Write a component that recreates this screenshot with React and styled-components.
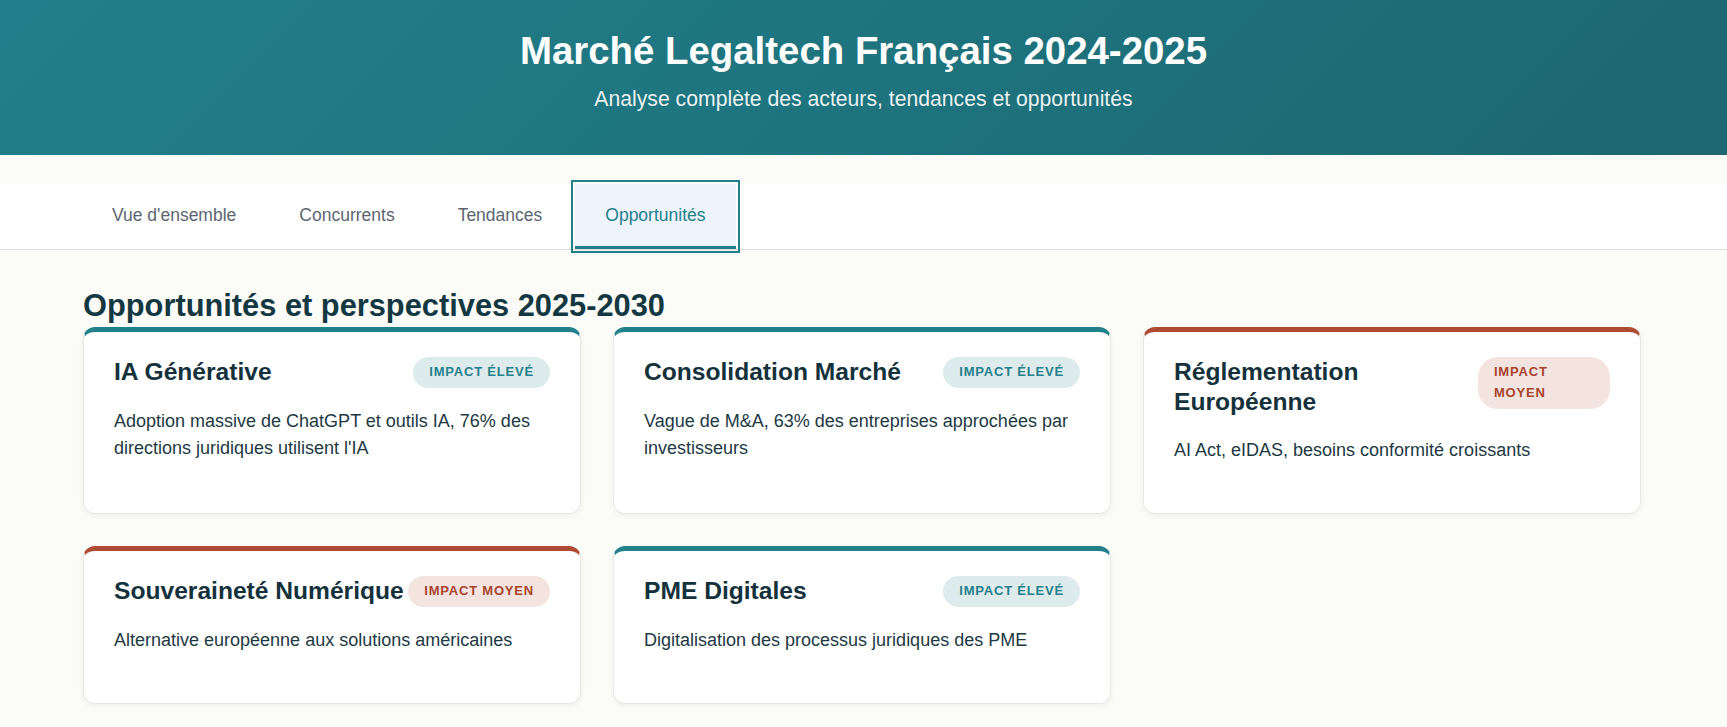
import React, { useState } from 'react';
import styled, { createGlobalStyle } from 'styled-components';

const GlobalStyle = createGlobalStyle`
  * { box-sizing: border-box; }
  body {
    margin: 0;
    background: #fbfbf8;
    font-family: "Liberation Sans", Arial, sans-serif;
    color: #16333d;
  }
`;

// palette
const tones = {
  teal: { bar: '#21808a', bg: '#deebed', text: '#26808b' },
  rust: { bar: '#b04b33', bg: '#f3e4e0', text: '#a8432d' }
};

const Header = styled.header`
  background: linear-gradient(135deg, #21808b 0%, #1c6771 100%);
  color: #ffffff;
  text-align: center;
  padding: 28px 20px 44px;

  h1 {
    margin: 0 0 12px;
    font-size: 2.4rem;
    line-height: 1.2;
    font-weight: 700;
  }

  p {
    margin: 0;
    font-size: 21.2px;
    line-height: 1.18;
    color: rgba(255, 255, 255, 0.92);
  }
`;

const TabBar = styled.nav`
  margin-top: 29px;
  background: #ffffff;
  border-bottom: 1px solid #dcdcdc;
  padding: 0 82px;
  display: flex;
  gap: 3px;
`;

const Tab = styled.button`
  font-family: inherit;
  font-size: 17.5px;
  line-height: 20px;
  padding: 21px 30px;
  border: none;
  border-bottom: 3px solid ${p => (p.$active ? '#21808a' : 'transparent')};
  background: ${p => (p.$active ? '#eef4fc' : 'transparent')};
  color: ${p => (p.$active ? '#21808a' : '#5c6670')};
  outline: ${p => (p.$active ? '2px solid #21808a' : 'none')};
  outline-offset: 2px;
  cursor: pointer;
`;

const Main = styled.main`
  padding: 38px 86px 40px 83px;
`;

const SectionTitle = styled.h2`
  margin: 0 0 3px;
  font-size: 30.8px;
  line-height: 1.17;
  font-weight: 700;
  color: #143842;
`;

const Grid = styled.div`
  display: grid;
  grid-template-columns: repeat(3, 1fr);
  gap: 32px;
`;

const Card = styled.div`
  background: #ffffff;
  border: 1px solid #e7e7e4;
  border-top: 5px solid ${p => tones[p.$tone].bar};
  border-radius: 12px;
  padding: 25px 30px 31px;
  box-shadow: 0 2px 6px rgba(0, 0, 0, 0.05);
`;

const CardHead = styled.div`
  display: flex;
  justify-content: space-between;
  align-items: flex-start;

  h3 {
    margin: 0 0 3px;
    font-size: 24.6px;
    line-height: 1.2;
    font-weight: 700;
    color: #15323c;
  }
`;

const Badge = styled.span`
  background: ${p => tones[p.$tone].bg};
  color: ${p => tones[p.$tone].text};
  font-size: 13px;
  font-weight: 700;
  letter-spacing: 0.8px;
  line-height: 1.6;
  padding: 5px 16px;
  border-radius: 20px;
  text-transform: uppercase;
`;

const Desc = styled.p`
  margin: 18px 0;
  font-size: 1.125rem;
  line-height: 1.5;
  color: #1d3943;
`;

const opportunities = [
  {
    title: 'IA Générative',
    impact: 'Impact élevé',
    tone: 'teal',
    text: "Adoption massive de ChatGPT et outils IA, 76% des directions juridiques utilisent l'IA"
  },
  {
    title: 'Consolidation Marché',
    impact: 'Impact élevé',
    tone: 'teal',
    text: 'Vague de M&A, 63% des entreprises approchées par investisseurs'
  },
  {
    title: 'Réglementation Européenne',
    impact: 'Impact moyen',
    tone: 'rust',
    text: 'AI Act, eIDAS, besoins conformité croissants'
  },
  {
    title: 'Souveraineté Numérique',
    impact: 'Impact moyen',
    tone: 'rust',
    text: 'Alternative européenne aux solutions américaines'
  },
  {
    title: 'PME Digitales',
    impact: 'Impact élevé',
    tone: 'teal',
    text: 'Digitalisation des processus juridiques des PME'
  }
];

const tabs = ["Vue d'ensemble", 'Concurrents', 'Tendances', 'Opportunités'];

export default function App() {
  const [active, setActive] = useState('Opportunités');

  return (
    <>
      <GlobalStyle />
      <Header>
        <h1>Marché Legaltech Français 2024-2025</h1>
        <p>Analyse complète des acteurs, tendances et opportunités</p>
      </Header>

      <TabBar>
        {tabs.map(t => (
          <Tab key={t} $active={t === active} onClick={() => setActive(t)}>
            {t}
          </Tab>
        ))}
      </TabBar>

      <Main>
        <SectionTitle>Opportunités et perspectives 2025-2030</SectionTitle>
        <Grid>
          {opportunities.map(o => (
            <Card key={o.title} $tone={o.tone}>
              <CardHead>
                <h3>{o.title}</h3>
                <Badge $tone={o.tone}>{o.impact}</Badge>
              </CardHead>
              <Desc>{o.text}</Desc>
            </Card>
          ))}
        </Grid>
      </Main>
    </>
  );
}
